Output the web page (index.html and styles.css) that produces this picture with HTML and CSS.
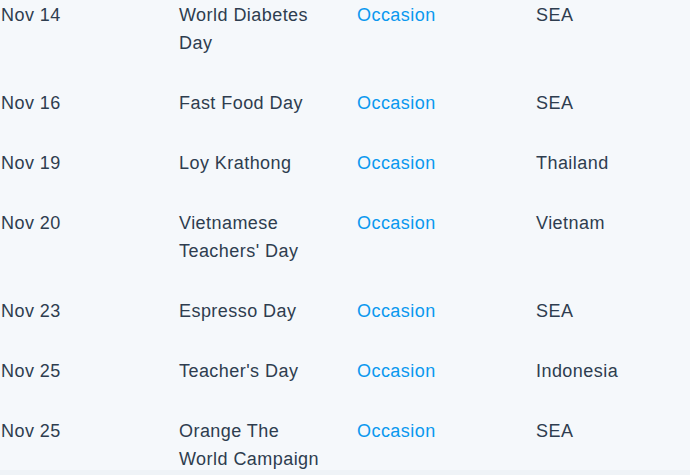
FILE: index.html
```html
<!DOCTYPE html>
<html>
<head>
<meta charset="utf-8">
<link rel="stylesheet" href="styles.css">
</head>
<body>
<div class="table">
  <div class="row">
    <div class="cell">Nov 14</div>
    <div class="cell">World Diabetes Day</div>
    <div class="cell"><a class="link" href="#">Occasion</a></div>
    <div class="cell">SEA</div>
  </div>
  <div class="row">
    <div class="cell">Nov 16</div>
    <div class="cell">Fast Food Day</div>
    <div class="cell"><a class="link" href="#">Occasion</a></div>
    <div class="cell">SEA</div>
  </div>
  <div class="row">
    <div class="cell">Nov 19</div>
    <div class="cell">Loy Krathong</div>
    <div class="cell"><a class="link" href="#">Occasion</a></div>
    <div class="cell">Thailand</div>
  </div>
  <div class="row">
    <div class="cell">Nov 20</div>
    <div class="cell">Vietnamese Teachers' Day</div>
    <div class="cell"><a class="link" href="#">Occasion</a></div>
    <div class="cell">Vietnam</div>
  </div>
  <div class="row">
    <div class="cell">Nov 23</div>
    <div class="cell">Espresso Day</div>
    <div class="cell"><a class="link" href="#">Occasion</a></div>
    <div class="cell">SEA</div>
  </div>
  <div class="row">
    <div class="cell">Nov 25</div>
    <div class="cell">Teacher's Day</div>
    <div class="cell"><a class="link" href="#">Occasion</a></div>
    <div class="cell">Indonesia</div>
  </div>
  <div class="row">
    <div class="cell">Nov 25</div>
    <div class="cell">Orange The World Campaign</div>
    <div class="cell"><a class="link" href="#">Occasion</a></div>
    <div class="cell">SEA</div>
  </div>
</div>
<div class="foot"></div>
</body>
</html>
```
FILE: styles.css
```css
html, body {
  margin: 0;
  padding: 0;
  background: #f5f8fb;
  overflow: hidden;
}
body {
  font-family: "Liberation Sans", Arial, Helvetica, sans-serif;
  font-size: 18px;
  line-height: 28px;
  letter-spacing: 0.45px;
  color: #2e3d4f;
}
.table {
  padding-top: 1px;
  padding-left: 1px;
  height: 469px;
  overflow: hidden;
}
.row {
  display: grid;
  grid-template-columns: 178px 178px 179px 1fr;
  padding-bottom: 32px;
}
.cell {
  padding-right: 34px;
}
.link {
  color: #0a98ef;
  text-decoration: none;
}
.foot {
  height: 5px;
  background: #eff3f7;
}
```
